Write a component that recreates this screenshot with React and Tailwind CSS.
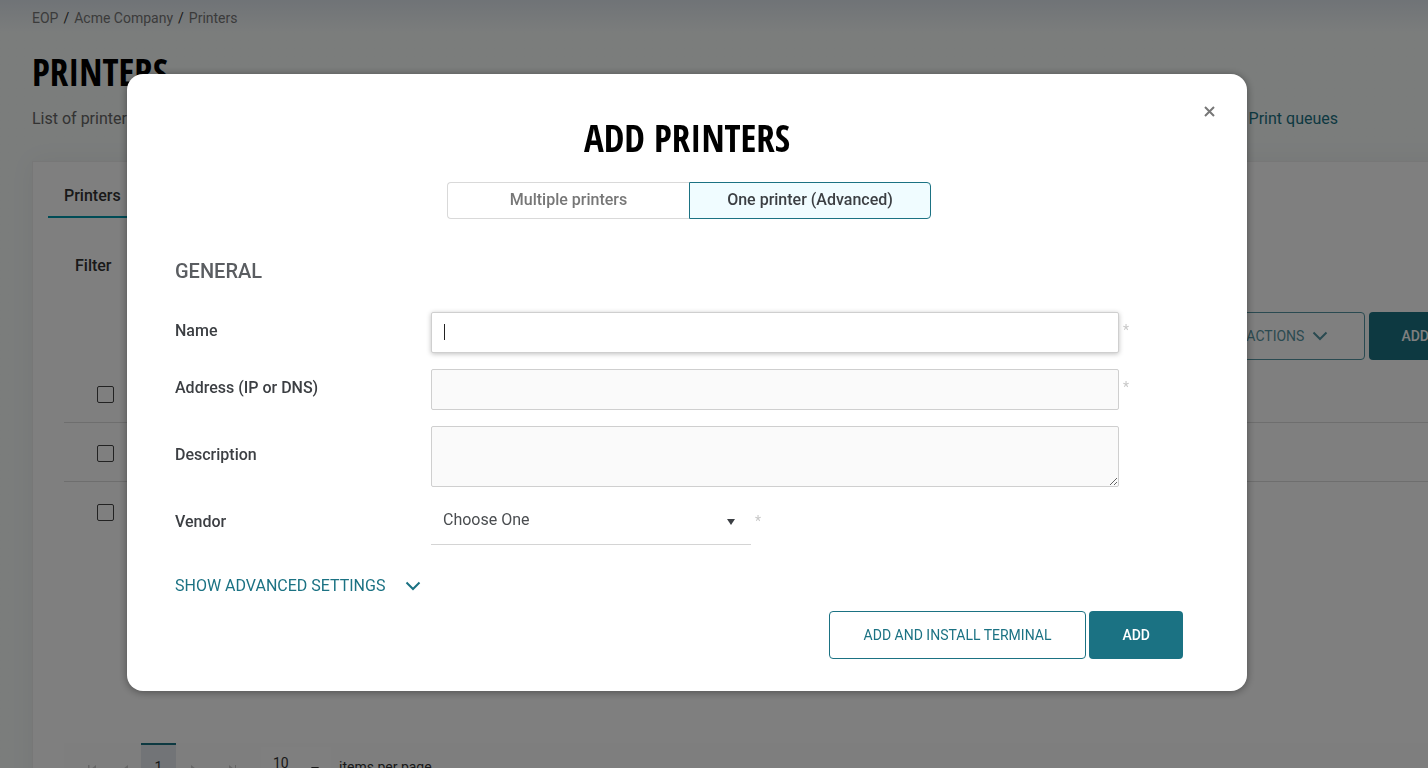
import React from "react";

const Chevron = ({ className }) => (
  <svg className={className} width="16" height="10" viewBox="0 0 16 10" fill="none" stroke="currentColor" strokeWidth="2" aria-hidden="true">
    <path d="M1.5 1.5 8 8l6.5-6.5" />
  </svg>
);

const Triangle = ({ className }) => (
  <svg className={className} width="8" height="6" viewBox="0 0 8 6" fill="currentColor" aria-hidden="true">
    <path d="M0 0h8L4 6z" />
  </svg>
);

const PagerIcon = ({ d }) => (
  <svg width="10" height="10" viewBox="0 0 10 10" fill="currentColor" aria-hidden="true">
    <path d={d} />
  </svg>
);

const Required = () => <span className="w-3 pt-2 pl-1 text-sm leading-5 text-[#c8c8c8]">*</span>;

const labelClass = "w-64 shrink-0 text-base leading-5 font-medium text-[#3c3f43]";
const fieldClass =
  "block w-full rounded-xs border border-[#cfcfcf] bg-[#fafafa] px-3 text-base text-[#3c3f43] outline-none";
const headingClass =
  "font-['Noto_Sans_ExtraCondensed','Open_Sans_Condensed','Roboto_Condensed',sans-serif] text-[37px] leading-10 font-bold text-black";

function PrintersPage() {
  return (
    <div className="h-screen overflow-hidden bg-[#f6faf9] bg-linear-to-b from-[#e0e7ee] to-[#f6faf9] to-[32px] px-8">
      <nav aria-label="Breadcrumb" className="flex gap-[5px] pt-2 text-sm leading-5 text-[#333]">
        <a href="#eop" className="text-[#777]">EOP</a>
        <span>/</span>
        <a href="#acme" className="text-[#777]">Acme Company</a>
        <span>/</span>
        <a href="#printers" className="text-[#777]">Printers</a>
      </nav>
      <h1 className={`${headingClass} pt-6`}>PRINTERS</h1>
      <div className="flex justify-between pt-[15px] pr-[58px] text-base leading-6">
        <p className="text-[#666]">List of printers</p>
        <a href="#queues" className="text-[#1b7283]">Print queues</a>
      </div>

      <div className="mt-[30px] -mr-[97px] min-h-screen border border-[#eee] bg-white px-[31px] shadow-[0_0_24px_#0000000d]">
        <div className="-ml-4 flex pt-[18px]">
          <button className="border-b-2 border-[#0098ad] px-4 pb-1 text-left text-base leading-8 font-medium text-[#333]">
            Printers
          </button>
        </div>
        <div className="pt-9 pl-[11px] text-base leading-6 font-medium text-[#333]">Filter</div>
        <div className="flex justify-end gap-1 pt-[34px]">
          <button className="flex h-12 items-center gap-2 rounded-sm border border-[#1b7283] px-9 text-sm text-[#1b7283] opacity-75">
            ACTIONS
            <Chevron />
          </button>
          <button className="h-12 rounded-sm bg-[#1b7283] px-8 text-sm font-medium text-white">ADD</button>
        </div>
        <table className="mt-[3px] w-full">
          <tbody>
            {["Printer 1", "Printer 2", "Printer 3"].map((name) => (
              <tr key={name} className="border-b border-[#ddd] last:border-0">
                <td className="h-[59px] pt-1 pl-[33px] align-middle">
                  <input
                    type="checkbox"
                    aria-label={name}
                    className="block size-[17px] appearance-none rounded-xs border border-[#444] bg-white"
                  />
                </td>
              </tr>
            ))}
          </tbody>
        </table>
        <div className="mt-[203px] flex h-12 items-stretch bg-[#fcfcfc] pl-[13px] text-sm leading-6 text-[#333]">
          <div className="flex w-16 items-center justify-around pt-1 text-[#ccc]">
            <PagerIcon d="M0 1h1.5v8H0zM8 1v8L3 5z" />
            <PagerIcon d="M8 1v8L3 5z" />
          </div>
          <button className="flex w-[35px] justify-center border-t-2 border-[#1b7283] bg-[#e4e9ee] pt-[10px]">1</button>
          <div className="flex w-[85px] items-center gap-7 pt-1 pl-3 text-[#ccc]">
            <PagerIcon d="M3 1v8l5-4z" />
            <PagerIcon d="M3 1v8l5-4zM9 1h1v8H9z" />
          </div>
          <div className="mt-1 flex w-[70px] items-start justify-between bg-white px-3 pt-1">
            <span>10</span>
            <Triangle className="mt-4" />
          </div>
          <div className="pt-3 pl-2">items per page</div>
        </div>
      </div>
    </div>
  );
}

function AddPrintersDialog() {
  return (
    <div className="fixed inset-0 flex items-start justify-center bg-black/50 pt-[74px] pr-[54px]">
      <div
        role="dialog"
        aria-modal="true"
        aria-labelledby="dialog-title"
        className="relative w-full max-w-[1120px] rounded-2xl bg-white pb-8 shadow-[0_1px_8px_#00000066]"
      >
        <button aria-label="Close" className="absolute top-[26px] right-[26px] p-1 text-[#777]">
          <svg width="15" height="15" viewBox="0 0 15 15" fill="none" stroke="currentColor" strokeWidth="2" aria-hidden="true">
            <path d="m3 3 9 9M12 3l-9 9" />
          </svg>
        </button>
        <h2 id="dialog-title" className={`${headingClass} pt-11 text-center`}>
          ADD PRINTERS
        </h2>
        <div className="flex justify-center pt-6 pl-1 text-base leading-5 font-medium">
          <button className="h-[37px] w-[242px] rounded-l-sm border border-r-0 border-[#d9d9d9] pb-0.5 text-[#777]">
            Multiple printers
          </button>
          <button className="h-[37px] w-[242px] rounded-r-sm border border-[#1b7283] bg-[#f0fcff] pb-0.5 text-[#3c3f43]">
            One printer (Advanced)
          </button>
        </div>

        <form className="pt-10 pr-16 pl-12">
          <h3 className="text-xl leading-6 font-medium text-[#5a5d61]">GENERAL</h3>
          <div className="flex flex-col gap-4 pt-[29px] pr-16">
            <div className="flex">
              <label htmlFor="name" className={`${labelClass} pt-[9px]`}>Name</label>
              <div className="relative grow">
                <input
                  id="name"
                  className="block h-[41px] w-full rounded-xs border border-[#cfcfcf] bg-white px-3 text-base text-[#3c3f43] caret-transparent shadow-[0_1px_5px_#00000040] outline-none"
                />
                <span className="absolute top-3 left-[13px] h-4 w-px bg-[#222]" />
              </div>
              <div className="-mr-3 flex"><Required /></div>
            </div>
            <div className="flex">
              <label htmlFor="address" className={`${labelClass} pt-[9px]`}>Address (IP or DNS)</label>
              <input id="address" className={`${fieldClass} h-[41px]`} />
              <div className="-mr-3 flex"><Required /></div>
            </div>
            <div className="flex items-center">
              <label htmlFor="description" className={`${labelClass} pb-1`}>Description</label>
              <textarea id="description" className={`${fieldClass} h-[61px]`} />
            </div>
            <div className="flex">
              <label htmlFor="vendor" className={`${labelClass} pt-[9px]`}>Vendor</label>
              <div className="relative w-80">
                <select
                  id="vendor"
                  className="block h-[42px] w-full appearance-none border-b border-[#d4d4d4] bg-white px-3 pb-2 text-base text-[#4a4d50] outline-none"
                >
                  <option>Choose One</option>
                </select>
                <Triangle className="pointer-events-none absolute top-4 right-4 text-[#3c3f43]" />
              </div>
              <Required />
            </div>
          </div>
          <button type="button" className="mt-[29px] flex items-center gap-5 text-base leading-6 text-[#1b7283]">
            SHOW ADVANCED SETTINGS
            <Chevron />
          </button>
          <div className="flex justify-end gap-[3px] pt-[13px] text-sm">
            <button type="button" className="h-12 rounded-sm border border-[#1b7283] px-[34px] text-[#1b7283]">
              ADD AND INSTALL TERMINAL
            </button>
            <button type="button" className="h-12 rounded-sm bg-[#1b7283] px-[33px] font-medium text-white">ADD</button>
          </div>
        </form>
      </div>
    </div>
  );
}

export default function App() {
  return (
    <div className="font-[Roboto,sans-serif]">
      <PrintersPage />
      <AddPrintersDialog />
    </div>
  );
}
